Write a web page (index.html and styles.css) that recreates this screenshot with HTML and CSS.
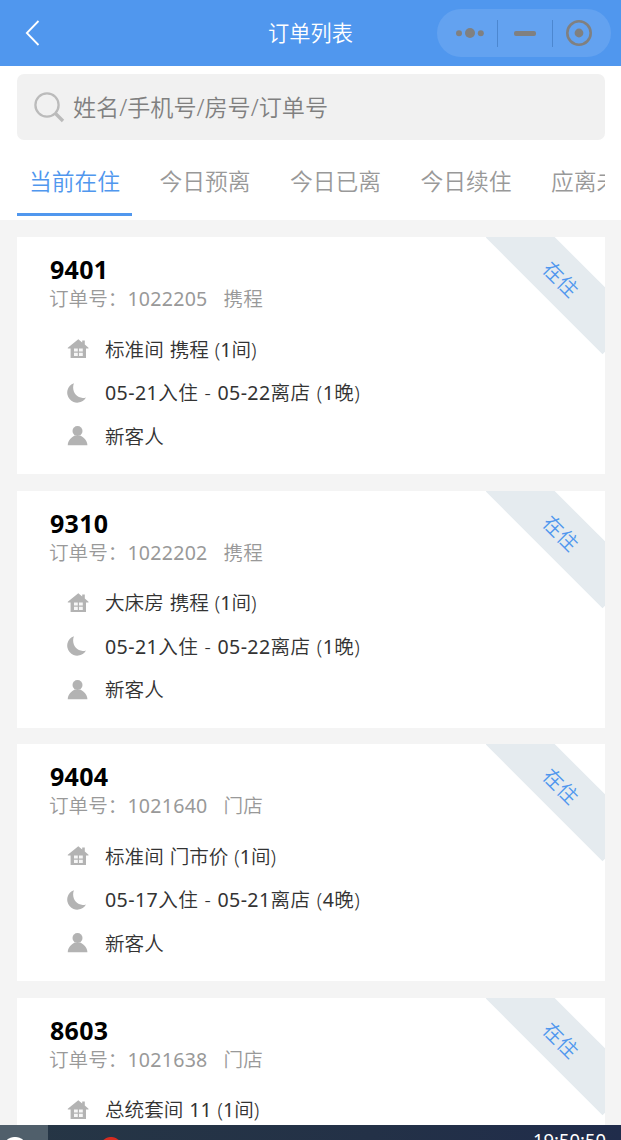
FILE: index.html
```html
<!DOCTYPE html>
<html lang="zh-Hans-CN">
<head>
	<meta charset="UTF-8">
	<meta name="viewport" content="width=device-width, initial-scale=1.0">
	<title>订单列表</title>
	<link rel="stylesheet" href="styles.css">
</head>

<body>
	<svg class="sprite">
		<symbol id="home" viewBox="0 0 22 20">
			<path d="M11.3 .2 15.2 3.4V1.6H17.8V5.6L21.5 8.7V9.5H19V19H3.6V9.5H.8V8.7Z"/>
			<path d="M7 9.6H10.8V12.6H7ZM12 9.6H15.8V12.6H12ZM7 13.8H10.8V16.9H7ZM12 13.8H15.8V16.9H12Z" fill="#f6f6f6"/>
		</symbol>
		<symbol id="moon" viewBox="0 0 22 20">
			<path d="M6.9 .2A10 10 0 1 0 19 14.4C10.5 17 3.8 9 6.9 .2Z"/>
		</symbol>
		<symbol id="user" viewBox="0 0 22 20">
			<circle cx="10.5" cy="5" r="5"/>
			<path d="M.7 19.3C.9 13.8 4.8 11.2 7.6 9.5H13.4C16.2 11.2 20.2 13.8 20.4 19.3Z"/>
		</symbol>
	</svg>

	<header>
		<svg class="back" viewBox="0 0 15 26"><path d="M13.5 1 1.8 13 13.5 25"/></svg>
		<h1>订单列表</h1>
		<div class="capsule">
			<span><svg viewBox="0 0 28 10"><circle cx="3" cy="5.3" r="3"/><circle cx="14" cy="5" r="5"/><circle cx="24.8" cy="5.3" r="3"/></svg></span>
			<span><svg class="minus" viewBox="0 0 22 5"><rect width="22" height="5" rx="2"/></svg></span>
			<span><svg class="close" viewBox="0 0 26 26"><circle class="ring" cx="13" cy="13" r="11.7"/><circle cx="13" cy="13" r="4.4"/></svg></span>
		</div>
	</header>

	<section class="top">
		<div class="search">
			<svg viewBox="0 0 31 31"><circle cx="13" cy="13" r="11.6"/><path class="handle" d="M21 21 29 29"/></svg>
			<span>姓名/手机号/房号/订单号</span>
		</div>
		<nav>
			<a class="active">当前在住</a>
			<a>今日预离</a>
			<a>今日已离</a>
			<a>今日续住</a>
			<a>应离未离</a>
		</nav>
	</section>

	<main>
		<article>
			<b class="ribbon">在住</b>
			<h2>9401</h2>
			<p class="order">订单号：<i>1022205</i>携程</p>
			<ul>
				<li><svg><use href="#home"/></svg><span>标准间 携程 (<i>1</i>间)</span></li>
				<li class="date"><svg><use href="#moon"/></svg><span><i>05-21</i>入住 - <i>05-22</i>离店 (<i>1</i>晚)</span></li>
				<li><svg><use href="#user"/></svg><span>新客人</span></li>
			</ul>
		</article>
		<article>
			<b class="ribbon">在住</b>
			<h2>9310</h2>
			<p class="order">订单号：<i>1022202</i>携程</p>
			<ul>
				<li><svg><use href="#home"/></svg><span>大床房 携程 (<i>1</i>间)</span></li>
				<li class="date"><svg><use href="#moon"/></svg><span><i>05-21</i>入住 - <i>05-22</i>离店 (<i>1</i>晚)</span></li>
				<li><svg><use href="#user"/></svg><span>新客人</span></li>
			</ul>
		</article>
		<article>
			<b class="ribbon">在住</b>
			<h2>9404</h2>
			<p class="order">订单号：<i>1021640</i>门店</p>
			<ul>
				<li><svg><use href="#home"/></svg><span>标准间 门市价 (<i>1</i>间)</span></li>
				<li class="date"><svg><use href="#moon"/></svg><span><i>05-17</i>入住 - <i>05-21</i>离店 (<i>4</i>晚)</span></li>
				<li><svg><use href="#user"/></svg><span>新客人</span></li>
			</ul>
		</article>
		<article>
			<b class="ribbon">在住</b>
			<h2>8603</h2>
			<p class="order">订单号：<i>1021638</i>门店</p>
			<ul>
				<li><svg><use href="#home"/></svg><span>总统套间 <i>11</i> (<i>1</i>间)</span></li>
			</ul>
		</article>
	</main>

	<footer>
		<span class="start"></span>
		<span class="app"></span>
		<time>19:50:50</time>
	</footer>
</body>
</html>
```
FILE: styles.css
```css
		* {
			box-sizing: border-box;
			margin: 0;
			padding: 0;
		}

		body {
			display: flex;
			flex-direction: column;
			overflow: hidden;
			height: 1140px;
			font: 350 19.6px "Noto Sans", "Noto Sans CJK SC", sans-serif;
			background: #f4f4f4;
			color: #333;
		}

		svg {
			display: block;
			flex: none;
		}
		.sprite {
			display: none;
		}
		i {
			font-style: normal;
			font-weight: 400;
		}

		header {
			display: grid;
			grid-template-columns: 184px 1fr 184px;
			align-items: center;
			flex: none;
			height: 66px;
			background: #5097ee;
			color: #fff;
		}
		.back {
			width: 15px;
			height: 26px;
			margin-left: 25px;
			fill: none;
			stroke: #fff;
			stroke-width: 1.8;
		}
		h1 {
			padding-bottom: 1px;
			font-size: 21.2px;
			font-weight: 350;
			line-height: 30px;
			text-align: center;
		}

		.capsule {
			display: grid;
			grid-template-columns: 60px 55px 1fr;
			align-items: center;
			width: 174px;
			height: 48px;
			border-radius: 24px;
			background: #63a2f0;
			fill: #808080;
		}
		.capsule span {
			display: flex;
			justify-content: center;
			align-items: center;
			height: 27px;
		}
		.capsule span + span {
			border-left: 1px solid #4c87d0;
		}
		.capsule svg {
			width: 28px;
			height: 10px;
			margin-left: 6px;
		}
		.capsule .minus {
			width: 22px;
			height: 5px;
			margin: 1px 0 0;
		}
		.capsule .close {
			width: 26px;
			height: 26px;
			margin: 0 6px 0 0;
		}
		.ring {
			fill: none;
			stroke: #808080;
			stroke-width: 2.6;
		}

		.top {
			flex: none;
			height: 154px;
			padding: 8px 16px 0 17px;
			background: #fff;
		}
		.search {
			display: flex;
			align-items: center;
			gap: 8px;
			height: 66px;
			padding-left: 17px;
			border-radius: 7px;
			background: #f1f1f1;
			color: #808080;
			font-size: 23.1px;
		}
		.search span {
			padding-bottom: 2px;
		}
		.search svg {
			width: 31px;
			height: 31px;
			fill: none;
			stroke: #bbb;
			stroke-width: 2.3;
		}
		.search .handle {
			stroke-width: 3.4;
		}

		nav {
			display: flex;
			gap: 15.5px;
			overflow: hidden;
			height: 76px;
		}
		nav a {
			flex: none;
			width: 115px;
			border-bottom: 3px solid transparent;
			line-height: 84px;
			text-align: center;
			font-size: 22.8px;
			color: #999;
		}
		nav .active {
			border-color: #5097ee;
			color: #5097ee;
		}

		main {
			display: flex;
			flex-direction: column;
			flex: 1;
			gap: 16.5px;
			overflow: hidden;
			min-height: 0;
			padding: 17px 16px 0 17px;
		}
		article {
			position: relative;
			flex: none;
			overflow: hidden;
			height: 237px;
			padding: 18px 32px 0;
			background: #fff;
		}
		.ribbon {
			position: absolute;
			top: 17px;
			left: 462px;
			width: 165px;
			height: 49px;
			padding-top: 1px;
			background: #e5ebef;
			color: #5097ee;
			font-size: 20px;
			font-weight: 350;
			line-height: 49px;
			text-align: center;
			transform: rotate(45deg);
		}
		h2 {
			padding-left: 1px;
			font-size: 25px;
			font-weight: 700;
			letter-spacing: .3px;
			line-height: 29px;
			color: #000;
		}
		.order {
			line-height: 29px;
			color: #999;
		}
		.order i {
			margin-right: 16px;
			letter-spacing: .25px;
		}
		ul {
			margin-top: 13.5px;
			padding-left: 18px;
			list-style: none;
		}
		li {
			display: flex;
			align-items: center;
			gap: 16px;
			height: 43.5px;
			white-space: pre;
			word-spacing: .8px;
		}
		.date {
			letter-spacing: .4px;
		}
		li svg {
			width: 22px;
			height: 20px;
			margin-top: 2px;
			fill: #b3b3b3;
		}

		footer {
			display: flex;
			flex: none;
			overflow: hidden;
			height: 15px;
			background: linear-gradient(90deg, #263645, #233147 60%, #202c4b);
			color: #fff;
		}
		.start {
			width: 48px;
			background: radial-gradient(circle at 15px 25px, #fff 12.5px, #505f6b 13.5px);
		}
		.app {
			width: 124px;
			background: radial-gradient(circle at 63px 23px, #d62b20 10.5px, transparent 11.5px);
		}
		time {
			margin: 4px 15px 0 auto;
			font-size: 18.4px;
			font-weight: 400;
			line-height: 22px;
		}
```
